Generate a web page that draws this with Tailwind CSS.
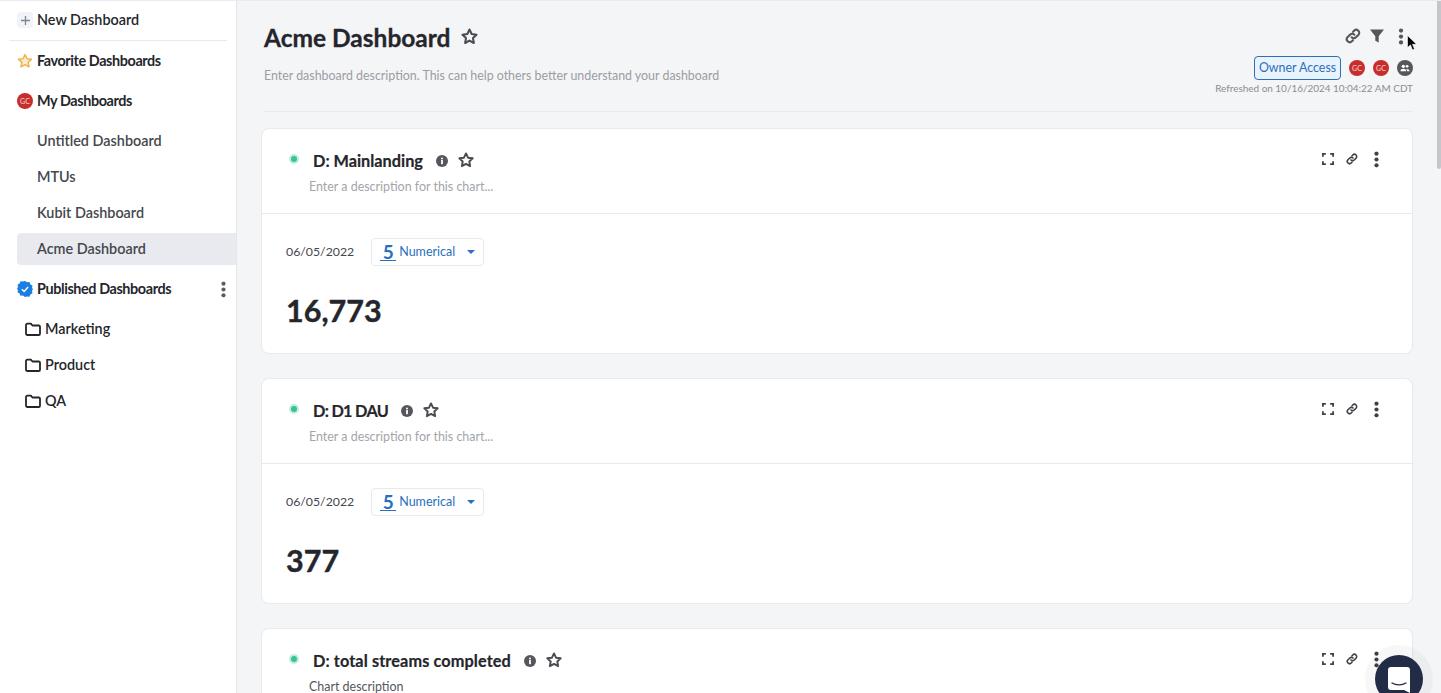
<!DOCTYPE html>
<html lang="en">
  <head>
    <meta charset="UTF-8" />
    <title>Acme Dashboard</title>
    <script src="https://cdn.jsdelivr.net/npm/@tailwindcss/browser@4"></script>
  </head>
  <body class="font-['Lato',sans-serif] text-[#25262b] bg-[#f4f5f7]">
    <!-- shared icons -->
    <svg class="hidden">
      <symbol id="star" viewBox="0 0 24 24"><path d="M12 3.2l2.7 5.7 6.2.8-4.5 4.3 1.1 6.2L12 17.2l-5.5 3 1.1-6.2-4.5-4.3 6.2-.8z" fill="none" stroke="currentColor" stroke-width="2.600" stroke-linejoin="round"/></symbol>
      <symbol id="link" viewBox="0 0 24 24"><path d="M10 14a4.500 4.500 0 0 0 6.400 0l3.600-3.600a4.500 4.500 0 0 0-6.400-6.400l-1.500 1.500M14 10a4.500 4.500 0 0 0-6.400 0L4 13.600A4.500 4.500 0 0 0 10.400 20l1.500-1.500" fill="none" stroke="currentColor" stroke-width="3.200" stroke-linecap="round"/></symbol>
      <symbol id="dots" viewBox="0 0 6 20"><circle cx="3" cy="3" r="2.500" fill="currentColor"/><circle cx="3" cy="10" r="2.500" fill="currentColor"/><circle cx="3" cy="17" r="2.500" fill="currentColor"/></symbol>
      <symbol id="expand" viewBox="0 0 14 14"><path d="M1 4.500V1h3.500M9.500 1H13v3.500M13 9.500V13H9.500M4.500 13H1V9.500" fill="none" stroke="currentColor" stroke-width="2.100"/></symbol>
      <symbol id="folder" viewBox="0 0 16 14"><path d="M1 3a1.300 1.300 0 0 1 1.300-1.300h3.600L7.400 3.500h6.300A1.300 1.300 0 0 1 15 4.800v6.900a1.300 1.300 0 0 1-1.300 1.300H2.300A1.300 1.300 0 0 1 1 11.700z" fill="none" stroke="currentColor" stroke-width="1.800" stroke-linejoin="round"/></symbol>
      <symbol id="info" viewBox="0 0 12 12"><circle cx="6" cy="6" r="6" fill="currentColor"/><rect x="5.100" y="5" width="1.800" height="4.200" fill="#fff"/><rect x="5.100" y="2.700" width="1.800" height="1.600" fill="#fff"/></symbol>
    </svg>

    <div class="flex h-[693px] w-[1441px] overflow-hidden relative border-t border-[#e8eaf6]">
      <!-- sidebar -->
      <aside class="w-[237px] shrink-0 bg-white border-r border-[#e3e5ea] flex flex-col text-[14.400px] font-semibold leading-5">
        <div class="mx-[9px] h-[40px] pb-px border-b border-[#e8e9ec] flex items-center gap-[3px] pl-2">
          <span class="w-4 h-4 rounded bg-[#f1f3f7] flex items-center justify-center">
            <svg class="w-[9px] h-[9px] text-[#7f8494]" viewBox="0 0 9 9"><path d="M4.500 0v9M0 4.500h9" stroke="currentColor" stroke-width="1.300"/></svg>
          </span>
          <span class="ml-[1px]">New Dashboard</span>
        </div>
        <div class="h-[40px] flex items-center pl-[17px] gap-1 font-bold tracking-[-0.4px]">
          <svg class="w-4 h-4" viewBox="0 0 24 24"><path d="M12 2.500l2.900 6.100 6.700.9-4.900 4.600 1.200 6.600L12 17.500l-5.900 3.200 1.200-6.600-4.900-4.600 6.700-.9z" fill="#fdf0cf" stroke="#f0b355" stroke-width="2.400" stroke-linejoin="round"/></svg>
          <span>Favorite Dashboards</span>
        </div>
        <div class="h-[40px] flex items-center pl-[17px] gap-1 font-bold tracking-[-0.4px]">
          <span class="w-4 h-4 rounded-full bg-[#c82c2c] text-white/80 text-[7px] tracking-normal font-normal flex items-center justify-center">GC</span>
          <span>My Dashboards</span>
        </div>
        <div class="flex flex-col pl-[17px] pt-[2px] text-[#45474d]">
          <div class="h-9 flex items-center pl-5">Untitled Dashboard</div>
          <div class="h-9 flex items-center pl-5">MTUs</div>
          <div class="h-9 flex items-center pl-5">Kubit Dashboard</div>
          <div class="h-[32px] my-[2px] flex items-center pl-5 bg-[#e8eaf0] rounded-l">Acme Dashboard</div>
        </div>
        <div class="h-[44px] flex items-center pl-[17px] pr-[10px] gap-1 font-bold tracking-[-0.4px]">
          <svg class="w-4 h-4" viewBox="0 0 16 16">
            <path d="M8 0l2.100 1.300 2.400-.2.900 2.300 2.100 1.200-.5 2.400L16 8l-1 1.900.5 2.400-2.100 1.200-.9 2.300-2.400-.2L8 16l-2.100-1.400-2.400.2-.9-2.300-2.100-1.200.5-2.400L0 8l1-1.900-.5-2.400 2.100-1.200.9-2.300 2.400.2z" fill="#1a7fe0"/>
            <path d="M4.800 8.200l2.300 2.200 4-4.400" fill="none" stroke="#fff" stroke-width="1.400"/>
          </svg>
          <span class="flex-1">Published Dashboards</span>
          <svg class="w-[5px] h-[17px] text-[#5c5e64]" viewBox="0 0 6 20"><use href="#dots"/></svg>
        </div>
        <div class="flex flex-col pl-[25px]">
          <div class="h-9 flex items-center gap-1"><svg class="w-4 h-[14px]" viewBox="0 0 16 14"><use href="#folder"/></svg>Marketing</div>
          <div class="h-9 flex items-center gap-1"><svg class="w-4 h-[14px]" viewBox="0 0 16 14"><use href="#folder"/></svg>Product</div>
          <div class="h-9 flex items-center gap-1"><svg class="w-4 h-[14px]" viewBox="0 0 16 14"><use href="#folder"/></svg>QA</div>
        </div>
      </aside>

      <!-- main -->
      <main class="flex-1 min-w-0 pl-6 pr-[28px]">
        <header class="h-[111px] ml-[3px] border-b border-[#e8e9ec] flex justify-between">
          <div class="pt-[21px]">
            <div class="flex items-center gap-[9px] h-8">
              <h1 class="text-[24.500px] font-bold leading-8 [-webkit-text-stroke:0.3px]">Acme Dashboard</h1>
              <svg class="w-[19px] h-[19px] text-[#4a4c52] -mt-1" viewBox="0 0 24 24"><use href="#star"/></svg>
            </div>
            <p class="mt-[14px] text-[12.400px] leading-4 text-[#9b9da3]">Enter dashboard description. This can help others better understand your dashboard</p>
          </div>
          <div class="flex flex-col items-end pt-[26px]">
            <div class="flex items-center text-[#55575d] h-[18px] mr-[9px]">
              <svg class="w-[16px] h-[16px]" viewBox="0 0 24 24"><use href="#link"/></svg>
              <svg class="w-[16px] h-[16px] ml-2" viewBox="0 0 16 16"><path d="M1 1.500h14L9.700 8.300V14.500l-3.400-1.800V8.300z" fill="currentColor"/></svg>
              <svg class="w-[6px] h-[17px] ml-[13px]" viewBox="0 0 6 20"><use href="#dots"/></svg>
            </div>
            <div class="flex items-center mt-[11px] h-6 gap-2">
              <span class="h-6 w-[87px] pt-px justify-center flex items-center border border-[#2f6fb7] bg-[#e8f3fd] rounded text-[12.400px] text-[#2f6fb7] leading-none">Owner Access</span>
              <span class="w-4 h-4 rounded-full bg-[#c82c2c] text-white/80 text-[7px] flex items-center justify-center">GC</span>
              <span class="w-4 h-4 rounded-full bg-[#c82c2c] text-white/80 text-[7px] flex items-center justify-center">GC</span>
              <span class="w-4 h-4 rounded-full bg-[#55575d] flex items-center justify-center">
                <svg class="w-[10px] h-[10px] text-white" viewBox="0 0 12 12"><circle cx="4" cy="4" r="2" fill="currentColor"/><circle cx="8.500" cy="4" r="1.700" fill="currentColor"/><path d="M0.500 10c0-2 1.500-3 3.500-3s3.500 1 3.500 3zM8.500 10c0-1.200-.3-2-1-2.800 2.200-.4 4 .8 4 2.800z" fill="currentColor"/></svg>
              </span>
            </div>
            <p class="text-[9.950px] leading-4 text-[#8b8d93]">Refreshed on 10/16/2024 10:04:22 AM CDT</p>
          </div>
        </header>

        <section class="mt-4 flex flex-col gap-6">
          <article class="h-[226px] bg-white border border-[#e8e9ec] rounded-lg">
            <div class="h-[85px] border-b border-[#e8e9ec] flex justify-between pl-[27px] pr-[33px]">
              <div>
                <div class="flex items-center h-5 mt-[22px]">
                  <span class="w-[10px] h-[10px] -mt-1 rounded-full bg-[#bfeede] flex items-center justify-center"><span class="w-[6px] h-[6px] rounded-full bg-[#3cc09a]"></span></span>
                  <h2 class="ml-[14px] text-[16.300px] font-bold leading-5 [-webkit-text-stroke:0.2px]">D: Mainlanding</h2>
                  <svg class="ml-[13px] w-3 h-3 text-[#55575d]" viewBox="0 0 12 12"><use href="#info"/></svg>
                  <svg class="ml-[9px] w-[18px] h-[18px] text-[#4a4c52] -mt-[3px]" viewBox="0 0 24 24"><use href="#star"/></svg>
                </div>
                <p class="ml-[20px] mt-[9px] text-[12.450px] leading-[13px] text-[#a3a5aa]">Enter a description for this chart...</p>
              </div>
              <div class="flex items-start gap-[12px] pt-[22px] text-[#3f4147]">
                <svg class="w-3 h-3 mt-[2px]" viewBox="0 0 14 14"><use href="#expand"/></svg>
                <svg class="w-3 h-3 mt-[2px]" viewBox="0 0 24 24"><use href="#link"/></svg>
                <svg class="w-[5px] h-[17px] ml-1" viewBox="0 0 6 20"><use href="#dots"/></svg>
              </div>
            </div>
            <div class="pl-6 pt-6">
              <div class="flex items-center gap-[17px] h-7">
                <span class="text-[12.300px] text-[#45474d]">06/05/2022</span>
                <div class="w-[113px] h-7 border border-[#e8e9ec] rounded-sm flex items-center pl-2 text-[#2a6fc0]">
                  <span class="text-[19px] font-bold leading-4 border-b border-[#2a6fc0] px-[2.500px]">5</span>
                  <span class="ml-[3px] text-[12.500px]">Numerical</span>
                  <span class="ml-[12px] w-0 h-0 border-x-[4px] border-x-transparent border-t-[4px] border-t-[#2a6fc0]"></span>
                </div>
              </div>
              <p class="mt-6 text-[30.500px] font-bold leading-10 [-webkit-text-stroke:0.4px]">16,773</p>
            </div>
          </article>

          <article class="h-[226px] bg-white border border-[#e8e9ec] rounded-lg">
            <div class="h-[85px] border-b border-[#e8e9ec] flex justify-between pl-[27px] pr-[33px]">
              <div>
                <div class="flex items-center h-5 mt-[22px]">
                  <span class="w-[10px] h-[10px] -mt-1 rounded-full bg-[#bfeede] flex items-center justify-center"><span class="w-[6px] h-[6px] rounded-full bg-[#3cc09a]"></span></span>
                  <h2 class="ml-[14px] text-[16.300px] font-bold leading-5 tracking-[-0.7px] [-webkit-text-stroke:0.2px]">D: D1 DAU</h2>
                  <svg class="ml-[13px] w-3 h-3 text-[#55575d]" viewBox="0 0 12 12"><use href="#info"/></svg>
                  <svg class="ml-[9px] w-[18px] h-[18px] text-[#4a4c52] -mt-[3px]" viewBox="0 0 24 24"><use href="#star"/></svg>
                </div>
                <p class="ml-[20px] mt-[9px] text-[12.450px] leading-[13px] text-[#a3a5aa]">Enter a description for this chart...</p>
              </div>
              <div class="flex items-start gap-[12px] pt-[22px] text-[#3f4147]">
                <svg class="w-3 h-3 mt-[2px]" viewBox="0 0 14 14"><use href="#expand"/></svg>
                <svg class="w-3 h-3 mt-[2px]" viewBox="0 0 24 24"><use href="#link"/></svg>
                <svg class="w-[5px] h-[17px] ml-1" viewBox="0 0 6 20"><use href="#dots"/></svg>
              </div>
            </div>
            <div class="pl-6 pt-6">
              <div class="flex items-center gap-[17px] h-7">
                <span class="text-[12.300px] text-[#45474d]">06/05/2022</span>
                <div class="w-[113px] h-7 border border-[#e8e9ec] rounded-sm flex items-center pl-2 text-[#2a6fc0]">
                  <span class="text-[19px] font-bold leading-4 border-b border-[#2a6fc0] px-[2.500px]">5</span>
                  <span class="ml-[3px] text-[12.500px]">Numerical</span>
                  <span class="ml-[12px] w-0 h-0 border-x-[4px] border-x-transparent border-t-[4px] border-t-[#2a6fc0]"></span>
                </div>
              </div>
              <p class="mt-6 text-[30.500px] font-bold leading-10 [-webkit-text-stroke:0.4px]">377</p>
            </div>
          </article>

          <article class="h-[226px] bg-white border border-[#e8e9ec] rounded-lg">
            <div class="h-[85px] flex justify-between pl-[27px] pr-[33px]">
              <div>
                <div class="flex items-center h-5 mt-[22px]">
                  <span class="w-[10px] h-[10px] -mt-1 rounded-full bg-[#bfeede] flex items-center justify-center"><span class="w-[6px] h-[6px] rounded-full bg-[#3cc09a]"></span></span>
                  <h2 class="ml-[14px] text-[16.300px] font-bold leading-5 tracking-[0.1px] [-webkit-text-stroke:0.2px]">D: total streams completed</h2>
                  <svg class="ml-[13px] w-3 h-3 text-[#55575d]" viewBox="0 0 12 12"><use href="#info"/></svg>
                  <svg class="ml-[9px] w-[18px] h-[18px] text-[#4a4c52] -mt-[3px]" viewBox="0 0 24 24"><use href="#star"/></svg>
                </div>
                <p class="ml-[20px] mt-[9px] text-[12.450px] leading-[13px] text-[#55575d]">Chart description</p>
              </div>
              <div class="flex items-start gap-[12px] pt-[22px] text-[#3f4147]">
                <svg class="w-3 h-3 mt-[2px]" viewBox="0 0 14 14"><use href="#expand"/></svg>
                <svg class="w-3 h-3 mt-[2px]" viewBox="0 0 24 24"><use href="#link"/></svg>
                <svg class="w-[5px] h-[17px] ml-1" viewBox="0 0 6 20"><use href="#dots"/></svg>
              </div>
            </div>
          </article>
        </section>
      </main>

      <!-- scrollbar thumb -->
      <div class="absolute right-0 top-0 w-[4px] h-[168px] bg-[#c4c6cb] rounded-b"></div>

      <!-- mouse cursor -->
      <svg class="absolute left-[1407px] top-[34px] w-[10px] h-[16px]" viewBox="0 0 10 16"><path d="M0.500 0.500v12l3-2.600 2 5 2-.8-2-4.800h4z" fill="#000" stroke="#fff" stroke-width="0.600"/></svg>

      <!-- chat bubble -->
      <div class="absolute left-[1375px] top-[654px] w-12 h-12 rounded-full bg-[#232c47] ring-[10px] ring-black/[0.03] flex items-start justify-center pt-[12px]">
        <svg class="w-[22px] h-[26px]" viewBox="0 0 22 26"><path d="M3 0h16a3 3 0 0 1 3 3v23l-6-3H3a3 3 0 0 1-3-3V3a3 3 0 0 1 3-3z" fill="#fff"/><path d="M4 16c4 2.500 10 2.500 14 0" fill="none" stroke="#232c47" stroke-width="1.400" stroke-linecap="round"/></svg>
      </div>
    </div>
  </body>
</html>
